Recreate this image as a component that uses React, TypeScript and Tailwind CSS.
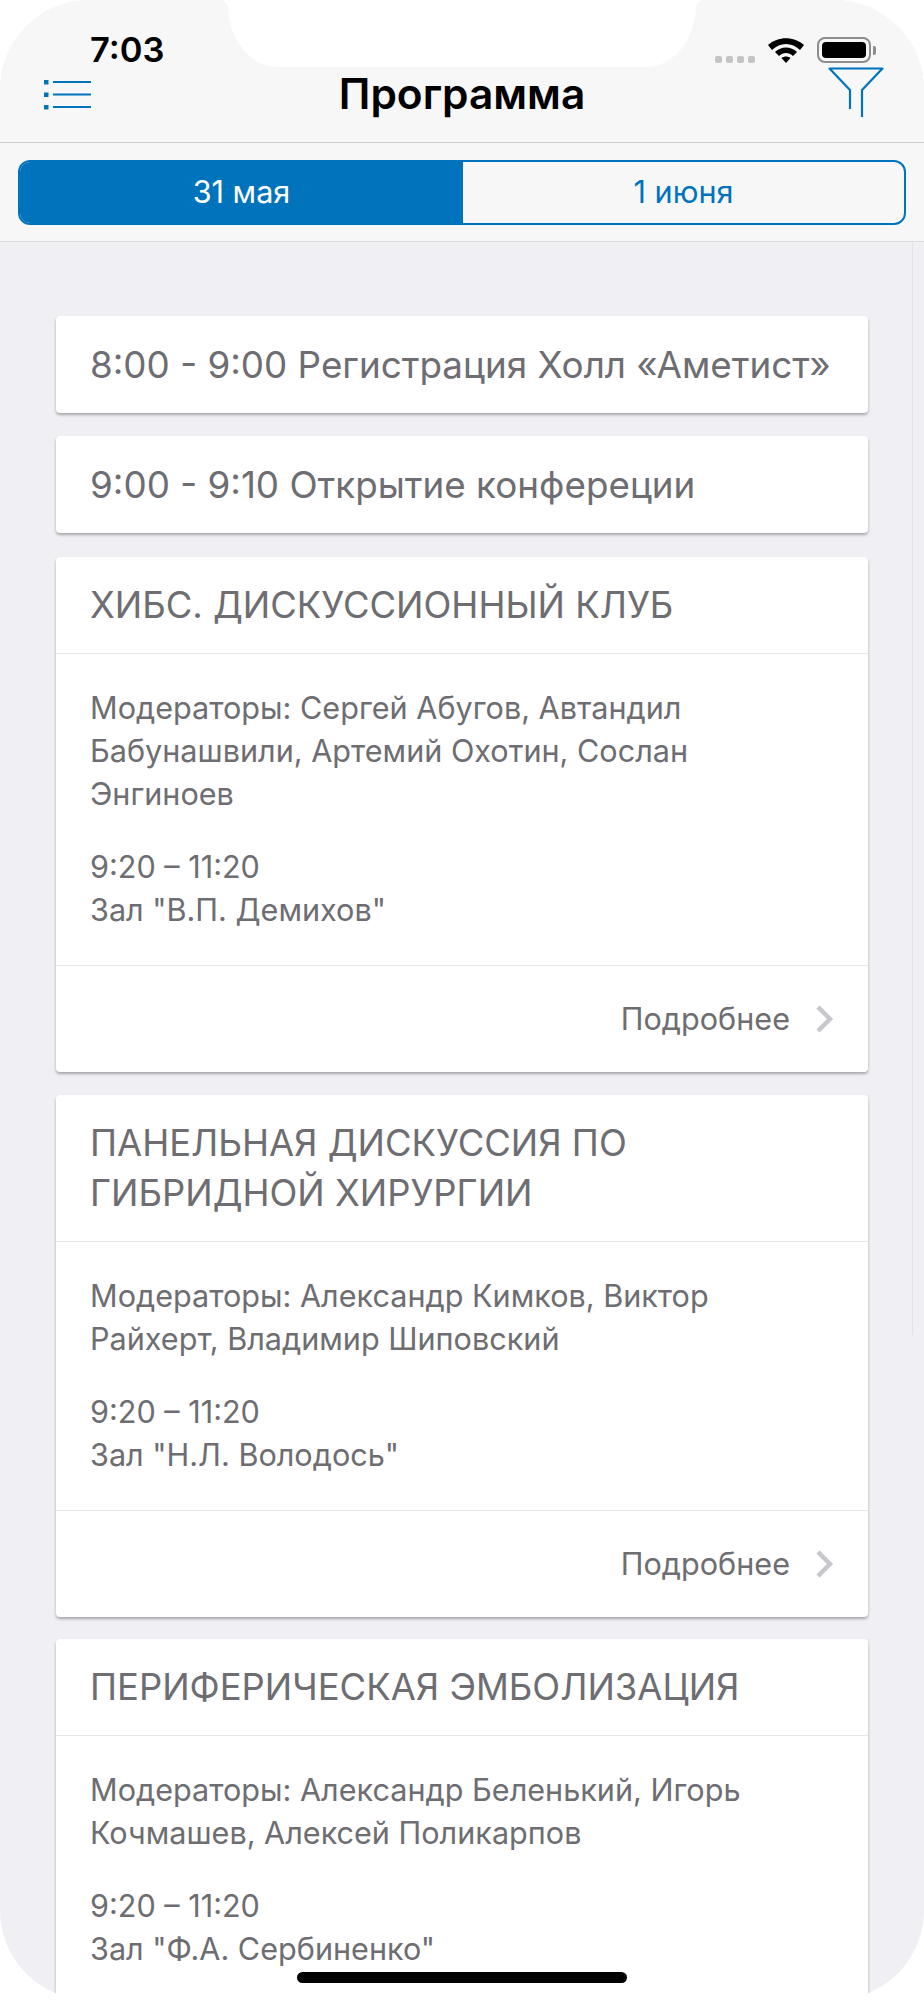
const sessions = [
  {
    title: ["ХИБС. ДИСКУССИОННЫЙ КЛУБ"],
    moderators: ["Модераторы: Сергей Абугов, Автандил", "Бабунашвили, Артемий Охотин, Сослан", "Энгиноев"],
    hall: 'Зал "В.П. Демихов"',
    more: true,
  },
  {
    title: ["ПАНЕЛЬНАЯ ДИСКУССИЯ ПО", "ГИБРИДНОЙ ХИРУРГИИ"],
    moderators: ["Модераторы: Александр Кимков, Виктор", "Райхерт, Владимир Шиповский"],
    hall: 'Зал "Н.Л. Володось"',
    more: true,
  },
  {
    title: ["ПЕРИФЕРИЧЕСКАЯ ЭМБОЛИЗАЦИЯ"],
    moderators: ["Модераторы: Александр Беленький, Игорь", "Кочмашев, Алексей Поликарпов"],
    hall: 'Зал "Ф.А. Сербиненко"',
    more: false, // below the fold
  },
];

const App = () => {
  return (
    <div className="w-[924px] h-[2000px] bg-white overflow-hidden font-['Inter',sans-serif]">
      <div className="relative w-[924px] h-[2000px] overflow-hidden rounded-[90px] bg-[#efeff4]">
        {/* nav bar */}
        <div className="h-[143px] bg-[#f7f7f7] border-b border-[#cfcfd1] flex items-end justify-center pb-[24px]">
          <h1 className="text-[42.4px] leading-[48px] font-semibold text-black">Программа</h1>
        </div>

        {/* notch */}
        <div className="absolute top-0 left-[228px] w-[468px] h-[67px] bg-white rounded-bl-[50px_62px] rounded-br-[50px_62px]"></div>
        <div className="absolute top-0 left-[220px] w-[8px] h-[8px] bg-white">
          <div className="w-full h-full bg-[#f7f7f7] rounded-tr-[8px]"></div>
        </div>
        <div className="absolute top-0 left-[696px] w-[8px] h-[8px] bg-white">
          <div className="w-full h-full bg-[#f7f7f7] rounded-tl-[8px]"></div>
        </div>

        {/* status bar */}
        <span className="absolute left-[90px] top-[30px] text-[34.5px] leading-[40px] font-semibold text-black">7:03</span>
        <div className="absolute left-[715px] top-[56px] flex gap-[4px]">
          <span className="w-[7px] h-[7px] rounded-[2px] bg-[#c4c4c4]"></span>
          <span className="w-[7px] h-[7px] rounded-[2px] bg-[#c4c4c4]"></span>
          <span className="w-[7px] h-[7px] rounded-[2px] bg-[#c4c4c4]"></span>
          <span className="w-[7px] h-[7px] rounded-[2px] bg-[#c4c4c4]"></span>
        </div>
        <svg className="absolute left-[767px] top-[36px]" width="38" height="28" viewBox="0 0 38 28">
          <path d="M1 9 C11 0 27 0 37 9 L33 14 C25 6 13 6 5 14 Z" fill="black" />
          <path d="M8 16 C14 10 24 10 30 16 L26 20 C22 16 16 16 12 20 Z" fill="black" />
          <path d="M14.5 22 C17 20 21 20 23.5 22 L19 27 Z" fill="black" />
        </svg>
        <div className="absolute left-[817px] top-[37px] w-[54px] h-[26px] rounded-[8px] border-[2px] border-[#8e8e8e] p-[3px]">
          <div className="w-full h-full rounded-[4px] bg-black"></div>
        </div>
        <div className="absolute left-[873px] top-[46px] w-[3px] h-[9px] rounded-r-[2px] bg-[#8e8e8e]"></div>

        {/* menu icon */}
        <svg className="absolute left-[43px] top-[78px]" width="49" height="33" viewBox="0 0 49 33" fill="#0073bd">
          <rect x="1" y="2" width="4.5" height="4.5" />
          <rect x="10" y="3" width="38" height="2" />
          <rect x="1" y="14.5" width="4.5" height="4.5" />
          <rect x="10" y="15.5" width="38" height="2" />
          <rect x="1" y="27" width="4.5" height="4.5" />
          <rect x="10" y="28" width="38" height="2" />
        </svg>

        {/* filter icon */}
        <svg className="absolute left-[827px] top-[66px]" width="58" height="54" viewBox="0 0 58 54" fill="none" stroke="#0073bd" strokeWidth="2.2" strokeLinejoin="round">
          <path d="M23 43 V24 L2.5 2.5 H55.5 L35 24 V51" />
        </svg>

        {/* day switch */}
        <div className="h-[99px] bg-[#f7f7f7] border-b border-[#d8d8da] px-[18px] flex items-center">
          <div className="flex w-full h-[65px] rounded-[12px] border-[2px] border-[#0073bd] overflow-hidden">
            <div className="w-[443px] bg-[#0073bd] text-white text-[30.6px] flex items-center justify-center">31 мая</div>
            <div className="flex-1 text-[#0073bd] text-[30.6px] flex items-center justify-center">1 июня</div>
          </div>
        </div>

        {/* scroll track line */}
        <div className="absolute left-[912px] top-[242px] w-px h-[1093px] bg-[#e2e2e8]"></div>

        {/* list */}
        <div className="pt-[74px] px-[56px] flex flex-col gap-[23px]">
          <div className="h-[97px] bg-white rounded-[4px] shadow-[0_2px_3px_rgba(0,0,0,0.3)] px-[34px] flex items-center text-[36.8px] text-[#6d6d72] whitespace-nowrap">
            8:00 - 9:00 Регистрация Холл «Аметист»
          </div>
          <div className="h-[97px] mb-[1px] bg-white rounded-[4px] shadow-[0_2px_3px_rgba(0,0,0,0.3)] px-[34px] flex items-center text-[36.8px] text-[#6d6d72] whitespace-nowrap">
            9:00 - 9:10 Открытие конфереции
          </div>
          <div className="flex flex-col gap-[22.5px]">
            {sessions.map((s) => (
              <div key={s.hall} className="bg-white rounded-[4px] shadow-[0_2px_3px_rgba(0,0,0,0.3)] text-[#6d6d72]">
                <div className="px-[34px] py-[23px] border-b border-[#e8e8ea] text-[36.4px] leading-[50px] whitespace-nowrap">
                  {s.title.map((line) => (
                    <div key={line}>{line}</div>
                  ))}
                </div>
                <div className="px-[34px] pt-[32px] pb-[34px] text-[30.6px] leading-[43px] whitespace-nowrap">
                  {s.moderators.map((line) => (
                    <div key={line}>{line}</div>
                  ))}
                  <div className="mt-[30px]">9:20 – 11:20</div>
                  <div>{s.hall}</div>
                </div>
                {s.more && (
                  <div className="h-[107px] border-t border-[#e8e8ea] flex items-center justify-end pr-[34px] text-[30.6px]">
                    Подробнее
                    <svg className="ml-[26px]" width="18" height="30" viewBox="0 0 18 30" fill="none" stroke="#c7c7cc" strokeWidth="4.5">
                      <path d="M2 3 L14 15 L2 27" />
                    </svg>
                  </div>
                )}
              </div>
            ))}
          </div>
        </div>

        {/* bottom edge */}
        <div className="absolute left-0 bottom-0 w-full h-[7px] bg-white"></div>

        {/* home indicator */}
        <div className="absolute left-[297px] top-[1972px] w-[330px] h-[11px] rounded-full bg-black"></div>
      </div>
    </div>
  );
};

export default App;
